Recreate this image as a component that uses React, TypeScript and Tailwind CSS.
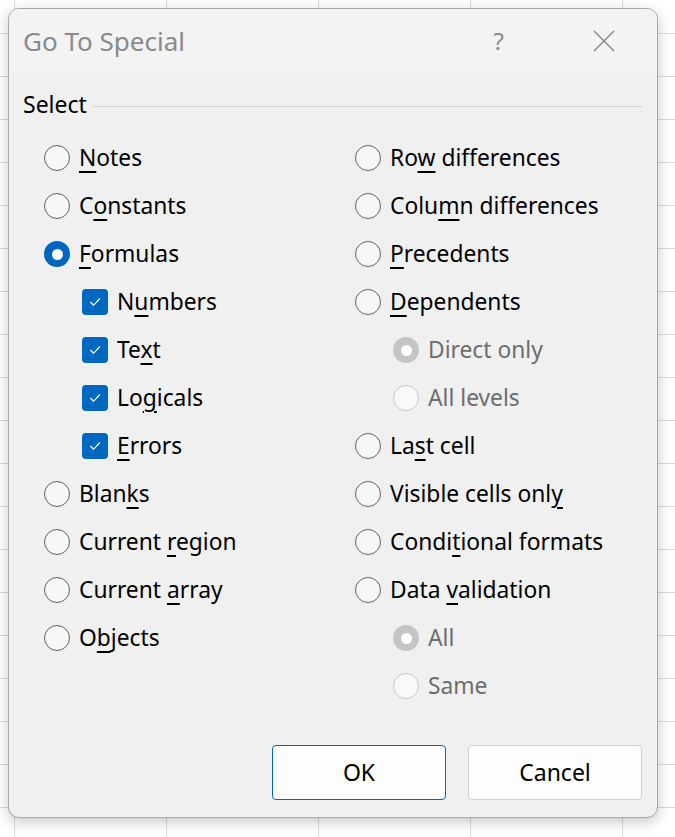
import React from 'react';

type Opt = { pre: string; key: string; post: string; kind?: 'radio' | 'check'; checked?: boolean; disabled?: boolean; indent?: boolean };

const left: Opt[] = [
  { pre: '', key: 'N', post: 'otes' },
  { pre: 'C', key: 'o', post: 'nstants' },
  { pre: '', key: 'F', post: 'ormulas', checked: true },
  { pre: 'N', key: 'u', post: 'mbers', kind: 'check', checked: true, indent: true },
  { pre: 'Te', key: 'x', post: 't', kind: 'check', checked: true, indent: true },
  { pre: 'Lo', key: 'g', post: 'icals', kind: 'check', checked: true, indent: true },
  { pre: '', key: 'E', post: 'rrors', kind: 'check', checked: true, indent: true },
  { pre: 'Blan', key: 'k', post: 's' },
  { pre: 'Current ', key: 'r', post: 'egion' },
  { pre: 'Current ', key: 'a', post: 'rray' },
  { pre: 'O', key: 'b', post: 'jects' },
];

const right: Opt[] = [
  { pre: 'Ro', key: 'w', post: ' differences' },
  { pre: 'Colu', key: 'm', post: 'n differences' },
  { pre: '', key: 'P', post: 'recedents' },
  { pre: '', key: 'D', post: 'ependents' },
  { pre: 'Direct only', key: '', post: '', disabled: true, checked: true, indent: true },
  { pre: 'All levels', key: '', post: '', disabled: true, indent: true },
  { pre: 'La', key: 's', post: 't cell' },
  { pre: 'Visible cells onl', key: 'y', post: '' },
  { pre: 'Condi', key: 't', post: 'ional formats' },
  { pre: 'Data ', key: 'v', post: 'alidation' },
  { pre: 'All', key: '', post: '', disabled: true, checked: true, indent: true },
  { pre: 'Same', key: '', post: '', disabled: true, indent: true },
];

const Radio = ({ checked, disabled }: { checked?: boolean; disabled?: boolean }) => {
  if (checked) {
    return (
      <span className={`w-[26px] h-[26px] rounded-full flex items-center justify-center shrink-0 ${disabled ? 'bg-[#c5c5c5]' : 'bg-[#0067c0]'}`}>
        <span className="w-[11px] h-[11px] rounded-full bg-white" />
      </span>
    );
  }
  return (
    <span className={`w-[26px] h-[26px] rounded-full border-[1.5px] shrink-0 ${disabled ? 'border-[#c8c8c8] bg-[#f9f9f9]' : 'border-[#616161] bg-[#f6f6f6]'}`} />
  );
};

const Check = () => (
  <span className="w-[26px] h-[26px] rounded-[4px] bg-[#0067c0] flex items-center justify-center shrink-0">
    <svg width="16" height="16" viewBox="0 0 16 16" fill="none">
      <path d="M3.5 8.3 L6.6 11.2 L12.5 5" stroke="white" strokeWidth="1.2" strokeLinecap="round" strokeLinejoin="round" />
    </svg>
  </span>
);

const Row = ({ o }: { o: Opt }) => (
  <div className={`h-[48px] flex items-center gap-[9px] ${o.indent ? 'pl-[38px]' : ''}`}>
    {o.kind === 'check' ? <Check /> : <Radio checked={o.checked} disabled={o.disabled} />}
    <span className={`text-[22.8px] leading-none ${o.disabled ? 'text-[#6d6d6d]' : 'text-black'}`}>
      {o.pre}
      {o.key && <span className="underline underline-offset-[5px] decoration-[1.5px]">{o.key}</span>}
      {o.post}
    </span>
  </div>
);

export default function App() {
  return (
    <div
      className="min-h-screen w-full p-[8px] bg-white bg-[linear-gradient(to_right,#dadada_1px,transparent_1px),linear-gradient(to_bottom,#dadada_1px,transparent_1px)] bg-[size:152px_43px] bg-[position:14px_33px]"
      style={{ fontFamily: '"Noto Sans", "Open Sans", sans-serif' }}
    >
      <div className="w-[650px] h-[810px] rounded-[11px] border border-[#a9a9a9] bg-[#f0f0f0] shadow-[0_4px_14px_rgba(0,0,0,0.22)] overflow-hidden flex flex-col">
        {/* title bar */}
        <div className="h-[63px] bg-[#f3f3f3] flex items-center pl-[14px] pr-[42px] shrink-0">
          <span className="text-[26px] text-[#8a8a8a] leading-none">Go To Special</span>
          <span className="ml-auto text-[24px] text-[#8a8a8a] leading-none mr-[89px]">?</span>
          <svg width="22" height="22" viewBox="0 0 22 22" className="shrink-0">
            <path d="M1 1 L21 21 M21 1 L1 21" stroke="#8a8a8a" strokeWidth="1.5" />
          </svg>
        </div>

        {/* select group */}
        <div className="flex items-center pl-[14px] pr-[15px] pt-[21px]">
          <span className="text-[23px] leading-none text-black">Select</span>
          <div className="flex-1 h-px bg-[#d6d6d6] ml-[6px] mt-[3px]" />
        </div>

        <div className="flex pt-[18px]">
          <div className="w-[346px] pl-[35px]">
            {left.map((o, i) => <Row key={i} o={o} />)}
          </div>
          <div>
            {right.map((o, i) => <Row key={i} o={o} />)}
          </div>
        </div>

        <div className="mt-auto mb-[17px] flex justify-end gap-[22px] pr-[15px]">
          <button className="w-[174px] h-[55px] rounded-[4px] border border-[#0067c0] bg-[#fdfdfd] text-[23px] text-black">OK</button>
          <button className="w-[174px] h-[55px] rounded-[4px] border border-[#d0d0d0] bg-[#fdfdfd] text-[23px] text-black">Cancel</button>
        </div>
      </div>
    </div>
  );
}
